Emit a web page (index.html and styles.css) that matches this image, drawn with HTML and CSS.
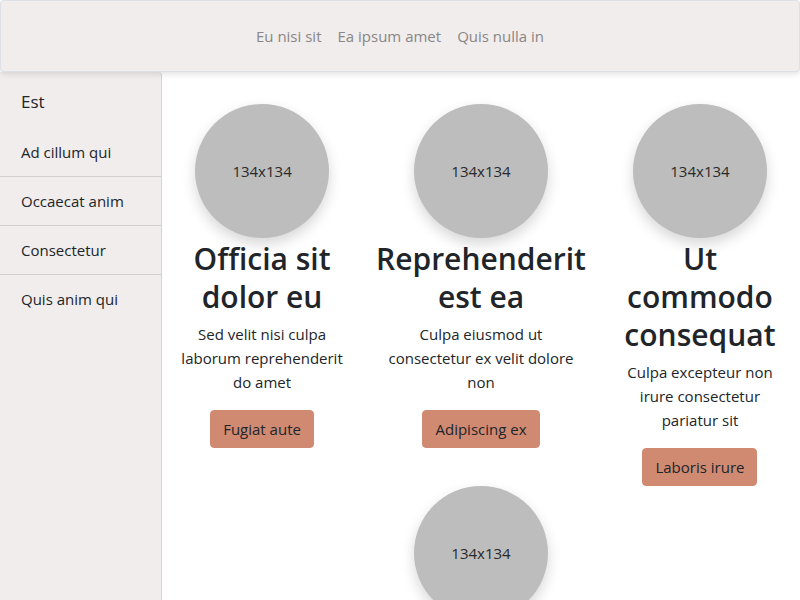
FILE: index.html
```html
<!DOCTYPE html>
<html lang="en">
<head>
<meta charset="utf-8">
<title>Page</title>
<link rel="stylesheet" href="styles.css">
</head>
<body>
<header class="navbar">
  <nav class="nav">
    <a class="nav-link" href="#">Eu nisi sit</a>
    <a class="nav-link" href="#">Ea ipsum amet</a>
    <a class="nav-link" href="#">Quis nulla in</a>
  </nav>
</header>
<div class="layout">
  <aside class="sidebar">
    <div class="sidebar-title">Est</div>
    <ul class="menu">
      <li class="menu-item">Ad cillum qui</li>
      <li class="menu-item">Occaecat anim</li>
      <li class="menu-item">Consectetur</li>
      <li class="menu-item">Quis anim qui</li>
    </ul>
  </aside>
  <main class="main">
    <section class="card">
      <div class="thumb">134x134</div>
      <h2 class="card-title">Officia sit dolor eu</h2>
      <p class="card-text">Sed velit nisi culpa laborum reprehenderit do amet</p>
      <a class="btn" href="#">Fugiat aute</a>
    </section>
    <section class="card">
      <div class="thumb">134x134</div>
      <h2 class="card-title">Reprehenderit est ea</h2>
      <p class="card-text">Culpa eiusmod ut consectetur ex velit dolore non</p>
      <a class="btn" href="#">Adipiscing ex</a>
    </section>
    <section class="card">
      <div class="thumb">134x134</div>
      <h2 class="card-title">Ut commodo consequat</h2>
      <p class="card-text">Culpa excepteur non irure consectetur pariatur sit</p>
      <a class="btn" href="#">Laboris irure</a>
    </section>
    <section class="card">
      <div class="thumb">134x134</div>
    </section>
  </main>
</div>
</body>
</html>
```
FILE: styles.css
```css
* { box-sizing: border-box; }
html, body { height: 100%; }
body {
  margin: 0;
  font-family: "Open Sans", "Noto Sans", sans-serif;
  font-size: 16px;
  line-height: 24px;
  color: #212529;
  background: #fff;
  overflow: hidden;
}
.navbar {
  position: relative;
  z-index: 2;
  height: 72px;
  background: #f0edec;
  border: 1px solid #dde0e6;
  border-radius: 4px;
  box-shadow: 0 2px 6px rgba(0,0,0,0.12);
  display: flex;
  align-items: center;
  justify-content: center;
}
.nav { display: flex; }
.nav-link {
  padding: 0 8px;
  color: #8a8686;
  text-decoration: none;
  font-size: 15px;
}
.layout {
  display: flex;
  height: calc(100% - 72px);
}
.sidebar {
  flex: 0 0 162px;
  background: #f0edec;
  border-right: 1px solid #d6d4d4;
  border-radius: 0 4px 0 0;
}
.sidebar-title {
  padding: 18px 21px 14px;
  font-size: 17px;
  line-height: 24px;
}
.menu { list-style: none; margin: 0; padding: 0; }
.menu-item {
  padding: 12px 21px;
  font-size: 15px;
  border-bottom: 1px solid #d2d0d0;
}
.menu-item:last-child { border-bottom: none; }
.main {
  flex: 1;
  display: flex;
  flex-wrap: wrap;
  justify-content: center;
  align-content: flex-start;
  column-gap: 24px;
  padding-top: 32px;
}
.card {
  width: 180px;
  min-width: min-content;
  text-align: center;
  display: flex;
  flex-direction: column;
  align-items: center;
}
.thumb {
  width: 134px;
  height: 134px;
  border-radius: 50%;
  background: #bdbdbd;
  box-shadow: 0 6px 14px rgba(0,0,0,0.16);
  display: flex;
  align-items: center;
  justify-content: center;
  font-size: 15px;
  color: #2a2a2a;
  margin-bottom: 2px;
}
.card-title {
  margin: 0 0 6px;
  font-size: 30px;
  line-height: 38px;
  font-weight: 600;
}
.card-text {
  margin: 0 0 16px;
  padding: 0 6px;
  font-size: 15px;
}
.btn {
  display: inline-block;
  padding: 6px 12px;
  line-height: 24px;
  font-size: 15px;
  color: #212529;
  background: #d08a72;
  border: 1px solid #d08a72;
  border-radius: 4px;
  text-decoration: none;
}
```
